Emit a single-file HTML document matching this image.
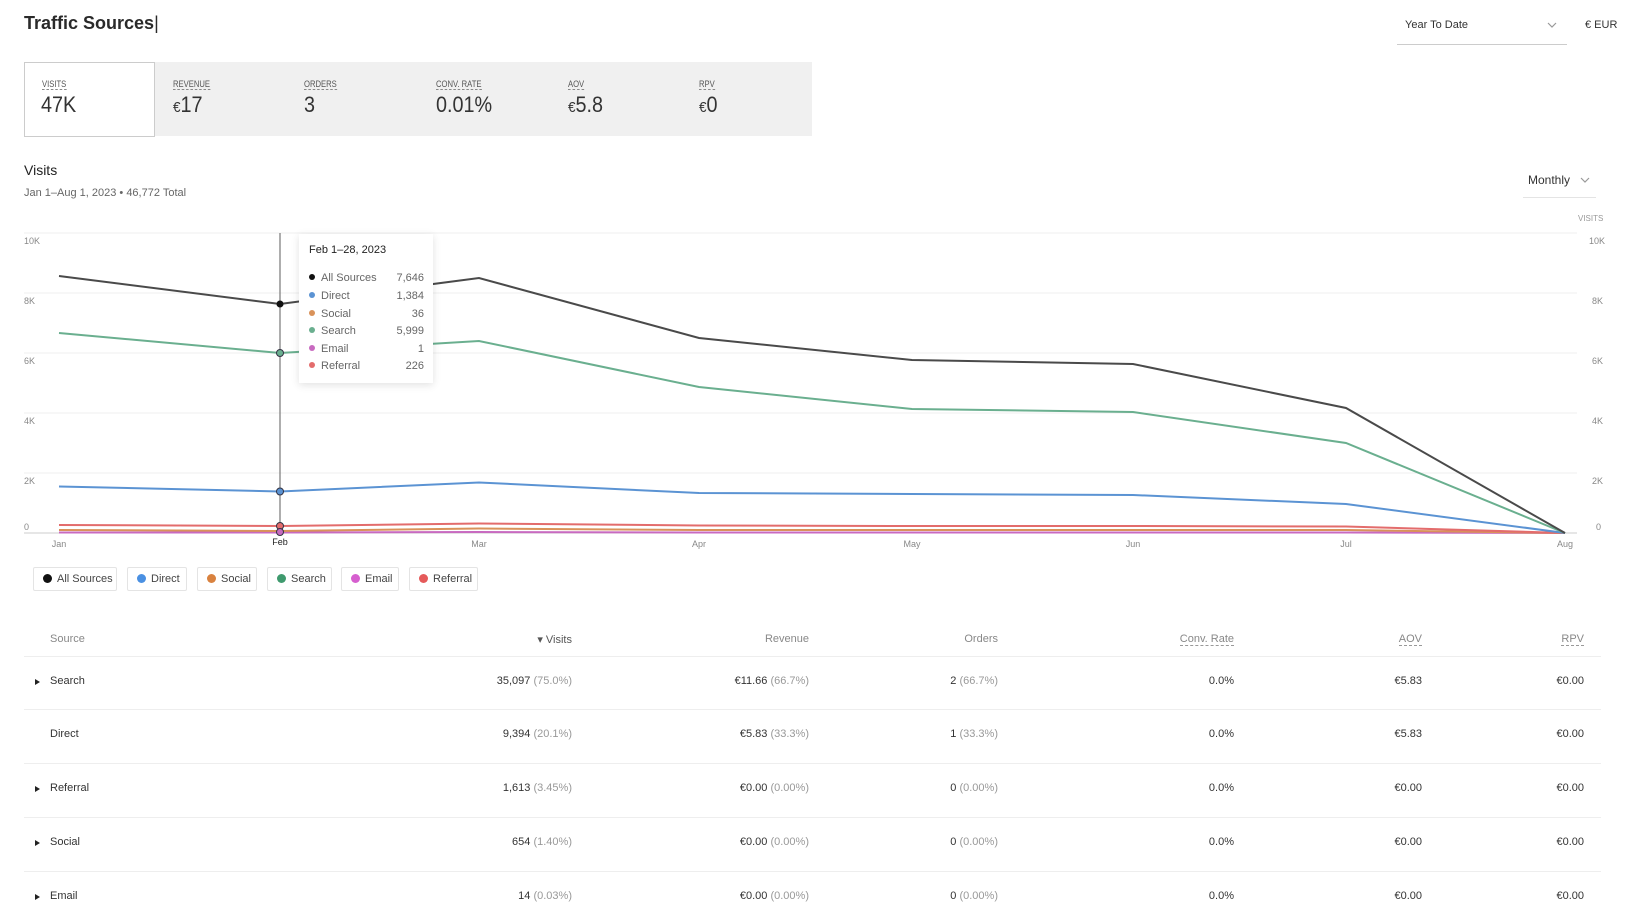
<!DOCTYPE html>
<html><head><meta charset="utf-8"><style>
*{margin:0;padding:0;box-sizing:border-box}
body{width:1627px;height:923px;background:#fff;font-family:"Liberation Sans",sans-serif;color:#222;position:relative;overflow:hidden}
.a{position:absolute;white-space:nowrap}
.lbl{font-size:9px;color:#555;border-bottom:1px dashed #888;line-height:10px;transform:scaleX(.85);transform-origin:left}
.val{font-size:22px;color:#333;transform:scaleX(.9);transform-origin:left}
.eu{font-size:15px}
.th{font-size:11px;color:#888}
.td{font-size:11px;color:#333}
.td span{color:#999}
.hl{position:absolute;left:24px;width:1577px;height:1px;background:#eee}
.tri{position:absolute;width:0;height:0;border-left:5px solid #222;border-top:3.5px solid transparent;border-bottom:3.5px solid transparent}
.leg{position:absolute;top:567px;height:24px;border:1px solid #e4e4e4;border-radius:2px;font-size:11px;color:#444;line-height:22px;padding-left:9px}
.leg i{display:inline-block;width:9px;height:9px;border-radius:50%;margin-right:5px;vertical-align:-1px}
</style></head><body>
<div class="a" style="left:24px;top:13px;font-size:18px;font-weight:bold;color:#2a2a2a">Traffic Sources<span style="font-weight:normal">|</span></div>
<div class="a" style="left:1405px;top:19px;font-size:11px;color:#333">Year To Date</div>
<svg class="a" style="left:1547px;top:22px" width="10" height="7"><path d="M1 1 L5 5 L9 1" stroke="#999" fill="none" stroke-width="1.2"/></svg>
<div class="a" style="left:1397px;top:44px;width:170px;height:1px;background:#ccc"></div>
<div class="a" style="left:1585px;top:19px;font-size:11px;color:#333">€ EUR</div>

<div class="a" style="left:24px;top:62px;width:788px;height:74px;background:#f0f0f0"></div>
<div class="a" style="left:24px;top:62px;width:131px;height:75px;background:#fff;border:1px solid #ccc"></div>
<div class="a lbl" style="left:42px;top:79px">VISITS</div><div class="a val" style="left:41px;top:92px">47K</div>
<div class="a lbl" style="left:173px;top:79px">REVENUE</div><div class="a val" style="left:173px;top:92px"><span class="eu">€</span>17</div>
<div class="a lbl" style="left:304px;top:79px">ORDERS</div><div class="a val" style="left:304px;top:92px">3</div>
<div class="a lbl" style="left:436px;top:79px">CONV. RATE</div><div class="a val" style="left:436px;top:92px">0.01%</div>
<div class="a lbl" style="left:568px;top:79px">AOV</div><div class="a val" style="left:568px;top:92px"><span class="eu">€</span>5.8</div>
<div class="a lbl" style="left:699px;top:79px">RPV</div><div class="a val" style="left:699px;top:92px"><span class="eu">€</span>0</div>

<div class="a" style="left:24px;top:162px;font-size:14px;color:#222">Visits</div>
<div class="a" style="left:24px;top:187px;font-size:11px;color:#666">Jan 1–Aug 1, 2023 • 46,772 Total</div>
<div class="a" style="left:1528px;top:173px;font-size:12px;color:#333">Monthly</div>
<svg class="a" style="left:1580px;top:177px" width="10" height="7"><path d="M1 1 L5 5 L9 1" stroke="#999" fill="none" stroke-width="1.2"/></svg>
<div class="a" style="left:1523px;top:197px;width:73px;height:1px;background:#e4e4e4"></div>
<div class="a" style="left:1578px;top:214px;font-size:8px;color:#999">VISITS</div>

<svg class="a" style="left:0;top:0" width="1627" height="610">
<g stroke="#efefef" stroke-width="1">
<line x1="24" y1="233" x2="1577" y2="233"/><line x1="24" y1="293" x2="1577" y2="293"/><line x1="24" y1="353" x2="1577" y2="353"/><line x1="24" y1="413" x2="1577" y2="413"/><line x1="24" y1="473" x2="1577" y2="473"/>
</g>
<line x1="24" y1="533" x2="1577" y2="533" stroke="#ccc"/>
<g font-family="Liberation Sans" font-size="9" fill="#888">
<text x="24" y="244">10K</text><text x="24" y="304">8K</text><text x="24" y="364">6K</text><text x="24" y="424">4K</text><text x="24" y="484">2K</text><text x="24" y="530">0</text>
<text x="1589" y="244">10K</text><text x="1592" y="304">8K</text><text x="1592" y="364">6K</text><text x="1592" y="424">4K</text><text x="1592" y="484">2K</text><text x="1596" y="530">0</text>
<g text-anchor="middle"><text x="59" y="547">Jan</text><text x="280" y="545" fill="#222">Feb</text><text x="479" y="547">Mar</text><text x="699" y="547">Apr</text><text x="912" y="547">May</text><text x="1133" y="547">Jun</text><text x="1346" y="547">Jul</text><text x="1565" y="547">Aug</text></g>
</g>
<line x1="280" y1="233" x2="280" y2="533" stroke="#777" stroke-width="1.2"/>
<g fill="none" stroke-width="2">
<polyline stroke="#c86ac0" points="59,532.5 280,532.5 479,532 699,532.5 912,532.5 1133,532.5 1346,532.5 1565,533"/>
<polyline stroke="#d9925a" points="59,530 280,531 479,528.5 699,530 912,530 1133,530 1346,530 1565,533"/>
<polyline stroke="#e36c6c" points="59,525 280,526 479,523.5 699,525.5 912,526 1133,526 1346,526.5 1565,533"/>
<polyline stroke="#5b93d3" points="59,486.5 280,491.5 479,482.5 699,493 912,494 1133,495 1346,504 1565,533"/>
<polyline stroke="#6aaf8f" points="59,333 280,353 479,341 699,387 912,409 1133,412 1346,443 1565,533"/>
<polyline stroke="#4a4a4a" points="59,276 280,304 479,278 699,338 912,360 1133,364 1346,408 1565,533"/>
</g>
<circle cx="280" cy="304" r="3.5" fill="#111"/>
<circle cx="280" cy="353" r="3.5" fill="#6aaf8f" stroke="#334" stroke-width="1"/>
<circle cx="280" cy="491.5" r="3.5" fill="#5b93d3" stroke="#334" stroke-width="1"/>
<circle cx="280" cy="526" r="3.5" fill="#e36c6c" stroke="#334" stroke-width="1"/>
<circle cx="280" cy="532" r="3.5" fill="#c86ac0" stroke="#334" stroke-width="1"/>
</svg>

<div class="a" style="left:299px;top:234px;width:134px;height:149px;background:#fff;box-shadow:0 2px 8px rgba(0,0,0,.12)"></div>
<div class="a" style="left:309px;top:244px;font-size:11px;color:#222">Feb 1–28, 2023</div>
<svg class="a" style="left:305px;top:270px" width="130" height="105" font-family="Liberation Sans" font-size="11" fill="#666">
<circle cx="7" cy="7" r="3" fill="#111"/><text x="16" y="11">All Sources</text><text x="119" y="11" text-anchor="end">7,646</text>
<circle cx="7" cy="25" r="3" fill="#5b93d3"/><text x="16" y="29">Direct</text><text x="119" y="29" text-anchor="end">1,384</text>
<circle cx="7" cy="43" r="3" fill="#d9925a"/><text x="16" y="47">Social</text><text x="119" y="47" text-anchor="end">36</text>
<circle cx="7" cy="60" r="3" fill="#6aaf8f"/><text x="16" y="64">Search</text><text x="119" y="64" text-anchor="end">5,999</text>
<circle cx="7" cy="78" r="3" fill="#c86ac0"/><text x="16" y="82">Email</text><text x="119" y="82" text-anchor="end">1</text>
<circle cx="7" cy="95" r="3" fill="#e36c6c"/><text x="16" y="99">Referral</text><text x="119" y="99" text-anchor="end">226</text>
</svg>

<div class="leg" style="left:33px;width:84px"><i style="background:#111"></i>All Sources</div>
<div class="leg" style="left:127px;width:60px"><i style="background:#4a90e2"></i>Direct</div>
<div class="leg" style="left:197px;width:60px"><i style="background:#d9823f"></i>Social</div>
<div class="leg" style="left:267px;width:65px"><i style="background:#3f9a6e"></i>Search</div>
<div class="leg" style="left:341px;width:58px"><i style="background:#d65fcf"></i>Email</div>
<div class="leg" style="left:409px;width:69px"><i style="background:#e55a5a"></i>Referral</div>

<div class="a th" style="left:50px;top:633px">Source</div>
<div class="a th" style="right:1055px;top:633px;color:#555">▾ Visits</div>
<div class="a th" style="right:818px;top:633px">Revenue</div>
<div class="a th" style="right:629px;top:633px">Orders</div>
<div class="a th" style="right:393px;top:633px;border-bottom:1px dashed #999">Conv. Rate</div>
<div class="a th" style="right:205px;top:633px;border-bottom:1px dashed #999">AOV</div>
<div class="a th" style="right:43px;top:633px;border-bottom:1px dashed #999">RPV</div>
<div class="hl" style="top:656px"></div><div class="hl" style="top:709px"></div><div class="hl" style="top:763px"></div><div class="hl" style="top:817px"></div><div class="hl" style="top:871px"></div>

<div class="tri" style="left:35px;top:679px"></div>
<div class="a td" style="left:50px;top:675px">Search</div>
<div class="a td" style="right:1055px;top:675px">35,097 <span>(75.0%)</span></div>
<div class="a td" style="right:818px;top:675px">€11.66 <span>(66.7%)</span></div>
<div class="a td" style="right:629px;top:675px">2 <span>(66.7%)</span></div>
<div class="a td" style="right:393px;top:675px">0.0%</div><div class="a td" style="right:205px;top:675px">€5.83</div><div class="a td" style="right:43px;top:675px">€0.00</div>

<div class="a td" style="left:50px;top:728px">Direct</div>
<div class="a td" style="right:1055px;top:728px">9,394 <span>(20.1%)</span></div>
<div class="a td" style="right:818px;top:728px">€5.83 <span>(33.3%)</span></div>
<div class="a td" style="right:629px;top:728px">1 <span>(33.3%)</span></div>
<div class="a td" style="right:393px;top:728px">0.0%</div><div class="a td" style="right:205px;top:728px">€5.83</div><div class="a td" style="right:43px;top:728px">€0.00</div>

<div class="tri" style="left:35px;top:786px"></div>
<div class="a td" style="left:50px;top:782px">Referral</div>
<div class="a td" style="right:1055px;top:782px">1,613 <span>(3.45%)</span></div>
<div class="a td" style="right:818px;top:782px">€0.00 <span>(0.00%)</span></div>
<div class="a td" style="right:629px;top:782px">0 <span>(0.00%)</span></div>
<div class="a td" style="right:393px;top:782px">0.0%</div><div class="a td" style="right:205px;top:782px">€0.00</div><div class="a td" style="right:43px;top:782px">€0.00</div>

<div class="tri" style="left:35px;top:840px"></div>
<div class="a td" style="left:50px;top:836px">Social</div>
<div class="a td" style="right:1055px;top:836px">654 <span>(1.40%)</span></div>
<div class="a td" style="right:818px;top:836px">€0.00 <span>(0.00%)</span></div>
<div class="a td" style="right:629px;top:836px">0 <span>(0.00%)</span></div>
<div class="a td" style="right:393px;top:836px">0.0%</div><div class="a td" style="right:205px;top:836px">€0.00</div><div class="a td" style="right:43px;top:836px">€0.00</div>

<div class="tri" style="left:35px;top:894px"></div>
<div class="a td" style="left:50px;top:890px">Email</div>
<div class="a td" style="right:1055px;top:890px">14 <span>(0.03%)</span></div>
<div class="a td" style="right:818px;top:890px">€0.00 <span>(0.00%)</span></div>
<div class="a td" style="right:629px;top:890px">0 <span>(0.00%)</span></div>
<div class="a td" style="right:393px;top:890px">0.0%</div><div class="a td" style="right:205px;top:890px">€0.00</div><div class="a td" style="right:43px;top:890px">€0.00</div>
</body></html>
